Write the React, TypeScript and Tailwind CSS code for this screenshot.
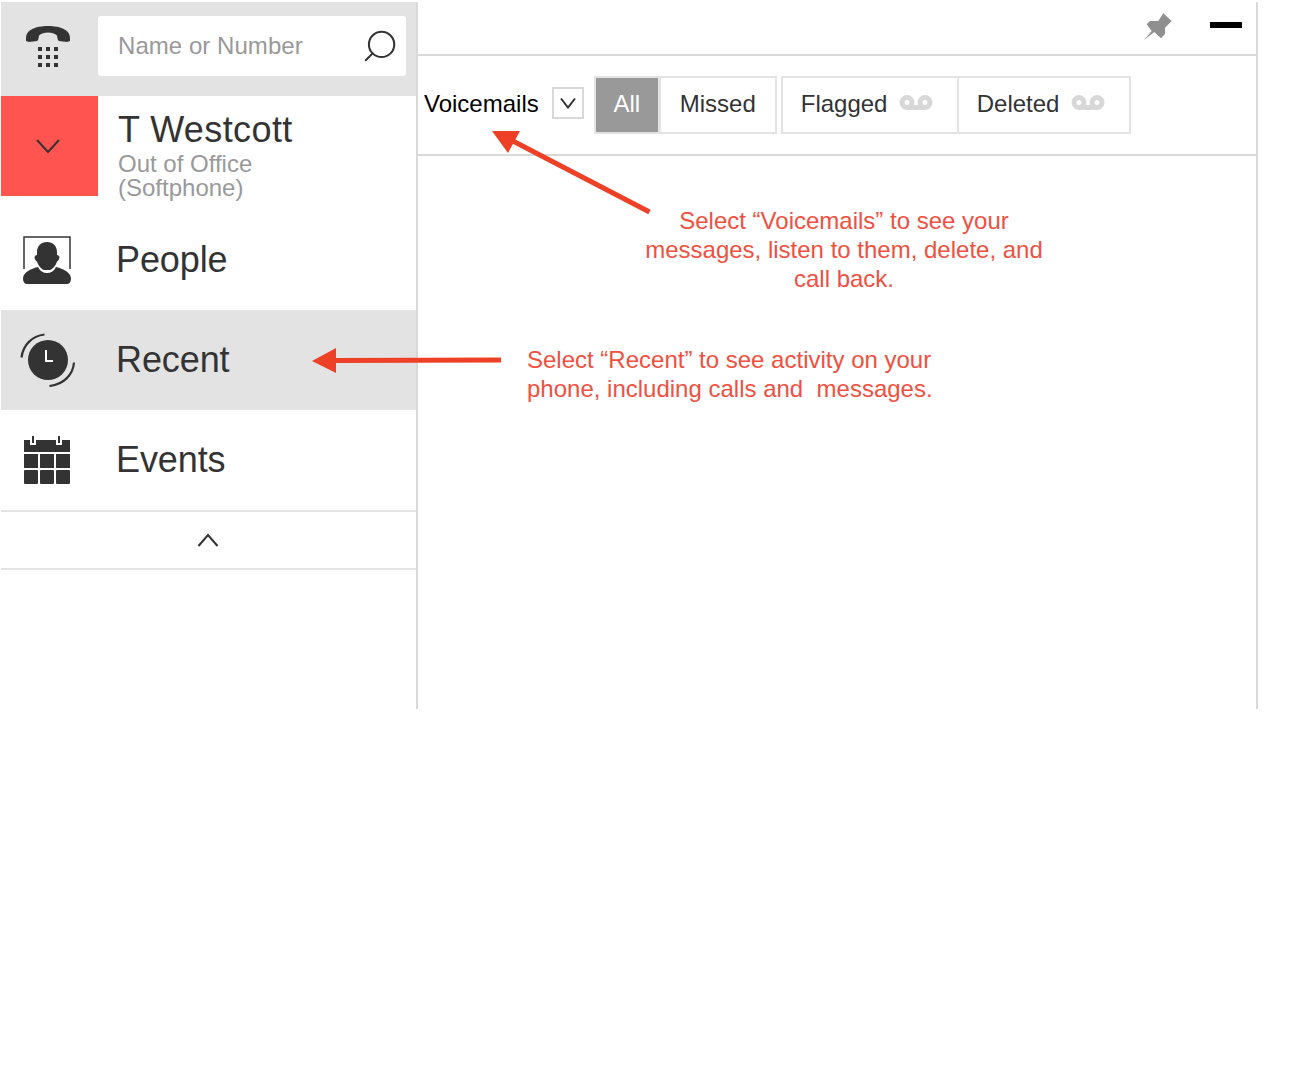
import { Search } from 'lucide-react';

const FONT = "font-['Liberation_Sans',Arial,sans-serif]";

function PhoneIcon() {
  return (
    <svg width="44" height="42" viewBox="0 0 44 42" fill="#333">
      <path d="M0 12C0 6 5 3 10 1.500C17 -0.500 27 -0.500 34 1.500C39 3 44 6 44 12V15L41 16L33 15C31.500 14.500 31.500 12 31 9.500C27 5.500 17 5.500 13 9.500C12.500 12 12.500 14.500 11 15L3 16L0 15Z" />
      {[12, 20, 28].map((x) =>
        [21, 29, 37].map((y) => <rect key={`${x}-${y}`} x={x} y={y} width="4" height="4" />),
      )}
    </svg>
  );
}

function PeopleIcon() {
  return (
    <svg width="48" height="48" viewBox="0 0 48 48" fill="#333">
      <path d="M1 33V1H47V33" fill="none" stroke="#333" strokeWidth="1.500" />
      <path d="M24 6C30 6 34 10 34 16C34 17 34 18 34 19C36 19 37 21 36 23C35.500 24.500 35 25 34 25.500C33 29 30 33 27 34H21C18 33 15 29 14 25.500C13 25 12.500 24.500 12 23C11 21 12 19 14 19C14 18 14 17 14 16C14 10 18 6 24 6Z" />
      <path d="M0 43C0 38 4 35 9 33C11 32 13 31.500 15 31C17 35 20 37 24 37C28 37 31 35 33 31C35 31.500 37 32 39 33C44 35 48 38 48 43C48 46 46 48 44 48H4C2 48 0 46 0 43Z" />
    </svg>
  );
}

function RecentIcon() {
  return (
    <svg className="ml-px" width="56" height="54" viewBox="0 0 56 54" fill="none">
      <circle cx="28" cy="27" r="20" fill="#333" />
      <path d="M26 17V28H33" stroke="#fff" strokeWidth="2" />
      <path d="M1.500 24.500C3 12 12 3 24.500 1.500" stroke="#333" strokeWidth="2.200" />
      <path d="M54 29.500C53 42 43.500 51.500 29.500 53" stroke="#333" strokeWidth="2.200" />
    </svg>
  );
}

function EventsIcon() {
  return (
    <svg width="46" height="48" viewBox="0 0 46 48" fill="#333">
      <path d="M0 4H6V9H12V4H32V9H38V4H46V16H0Z" />
      <rect x="8" y="0" width="2" height="7" />
      <rect x="34" y="0" width="2" height="7" />
      {[0, 16, 32].map((x) => (
        <rect key={`a${x}`} x={x} y="18" width="14" height="14" />
      ))}
      {[0, 16, 32].map((x) => (
        <rect key={`b${x}`} x={x} y="34" width="14" height="14" rx="1" />
      ))}
    </svg>
  );
}

function PinIcon() {
  return (
    <svg className="mb-[3px] mr-px" width="30" height="30" viewBox="0 0 30 30" fill="#8f8f8f">
      <path d="M1 28L8.700 19L3.700 12.300L7 9H15.300L20.300 1.300L28.700 9L22 15.700V22L18 26.300L11.300 20Z" />
    </svg>
  );
}

function VoicemailIcon() {
  return (
    <svg className="mb-[3px]" width="34" height="15" viewBox="0 0 34 15" fill="none" stroke="#d8d8d8" strokeWidth="5">
      <circle cx="8" cy="7.500" r="5" />
      <circle cx="26" cy="7.500" r="5" />
      <path d="M8 12.500H26" />
    </svg>
  );
}

function Chevron({ up = false }: { up?: boolean }) {
  return (
    <svg width="24" height="16" viewBox="0 0 24 16" fill="none" stroke="#333" strokeWidth="2">
      <path d={up ? 'M2.500 14L12 3L21.500 14' : 'M1 2L12 14L23 2'} />
    </svg>
  );
}

function NavRow({ label, active, icon }: { label: string; active?: boolean; icon: React.ReactNode }) {
  return (
    <div className={`flex h-[100px] items-center ${active ? 'bg-[#e3e3e3]' : ''}`}>
      <div className="flex w-[92px] shrink-0 justify-center">{icon}</div>
      <div className="pl-[23px] text-[36px] tracking-[-0.1px] text-[#333]">{label}</div>
    </div>
  );
}

export default function App() {
  return (
    <div className={`relative h-[1090px] w-[1290px] bg-white ${FONT}`}>
      <div className="ml-px flex h-[709px] w-[1257px] pt-[2px]">
        {/* 왼쪽 메뉴 */}
        <aside className="flex w-[415px] shrink-0 flex-col">
          <div className="flex h-[94px] items-center bg-[#e3e3e3] pb-[6px]">
            <div className="flex w-[97px] shrink-0 justify-center pr-[3px] pt-[2px]">
              <PhoneIcon />
            </div>
            <div className="flex h-[60px] w-[308px] items-center justify-between rounded-[3px] bg-white pl-5 pr-[7px]">
              <span className="text-[24px] tracking-[0.05px] text-[#999]">Name or Number</span>
              <Search className="-scale-x-100" size={38} color="#333" strokeWidth={1.300} />
            </div>
          </div>

          <div className="flex h-[114px]">
            <div className="flex h-[100px] w-[97px] shrink-0 items-center justify-center bg-[#ff544f] pr-[3px]">
              <Chevron />
            </div>
            <div className="pl-5">
              <div className="pt-[12px] text-[36px] leading-[44px] tracking-[0.4px] text-[#333]">T Westcott</div>
              <div className="text-[24px] leading-[24px] text-[#999]">
                Out of Office
                <br />
                (Softphone)
              </div>
            </div>
          </div>

          <NavRow label="People" icon={<PeopleIcon />} />
          <NavRow label="Recent" active icon={<RecentIcon />} />
          <NavRow label="Events" icon={<EventsIcon />} />

          <div className="flex h-[60px] items-center justify-center border-y-2 border-[#e3e3e3] pr-[2px]">
            <Chevron up />
          </div>
        </aside>

        {/* 오른쪽 패널 */}
        <main className="flex min-w-0 flex-1 flex-col border-x-2 border-[#d9d9d9]">
          <div className="flex h-[54px] shrink-0 items-center justify-end border-b-2 border-[#d9d9d9] pr-[14px]">
            <PinIcon />
            <div className="mb-[7px] ml-[36px] h-[6px] w-[32px] bg-black" />
          </div>

          <div className="flex h-[100px] shrink-0 items-center border-b-2 border-[#d9d9d9] pl-[6px]">
            <span className="mb-[2px] text-[24px] text-black">Voicemails</span>
            <div className="mb-[5px] ml-[13px] flex h-8 w-8 items-center justify-center border-2 border-[#d9d9d9]">
              <svg width="16" height="12" viewBox="0 0 16 12" fill="none" stroke="#333" strokeWidth="2">
                <path d="M1 1.500L8 10.500L15 1.500" />
              </svg>
            </div>

            <div className="ml-[10px] flex h-[58px] w-[183px] border-2 border-[#e3e3e3] text-[24px] text-[#333]">
              <div className="flex w-[62px] items-center justify-center bg-[#999] pb-[2px] text-white">All</div>
              <div className="flex flex-1 items-center justify-center border-l-[3px] border-[#e3e3e3] pb-[2px]">Missed</div>
            </div>

            <div className="ml-1 flex h-[58px] w-[350px] border-2 border-[#e3e3e3] text-[24px] text-[#333]">
              <div className="flex w-[174px] items-center gap-[12px] pb-[2px] pl-[18px]">
                Flagged
                <VoicemailIcon />
              </div>
              <div className="flex flex-1 items-center gap-[12px] border-l-2 border-[#e3e3e3] pb-[2px] pl-[18px]">
                Deleted
                <VoicemailIcon />
              </div>
            </div>
          </div>
        </main>
      </div>

      {/* 안내 화살표, 설명 */}
      <svg className="pointer-events-none absolute left-0 top-0" width="1290" height="1090" fill="#ee4026">
        <path d="M492 131H520L508 153Z" />
        <path d="M511 140L649.500 212" stroke="#ee4026" strokeWidth="5" />
        <path d="M312 361L336 348V373Z" />
        <path d="M336 360.500L501 360" stroke="#ee4026" strokeWidth="5" />
      </svg>
      <div className="absolute left-[629px] top-[206px] w-[430px] text-center text-[24px] leading-[29px] text-[#f0503f]">
        Select “Voicemails” to see your
        <br />
        messages, listen to them, delete, and
        <br />
        call back.
      </div>
      <div className="absolute left-[527px] top-[345px] whitespace-pre text-[24px] leading-[29px] text-[#f0503f]">
        {'Select “Recent” to see activity on your\nphone, including calls and  messages.'}
      </div>
    </div>
  );
}
